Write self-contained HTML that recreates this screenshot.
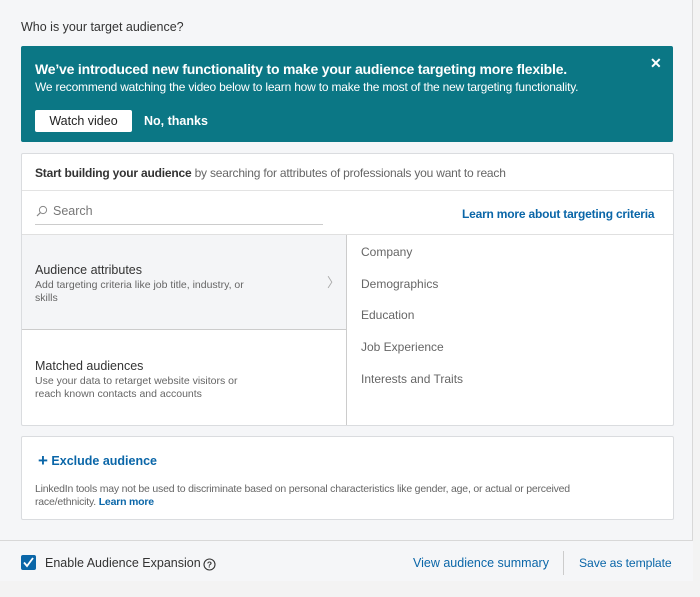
<!DOCTYPE html>
<html><head><style>
*{margin:0;padding:0;box-sizing:border-box}
body{width:700px;height:597px;background:#f3f3f3;font-family:"Liberation Sans",Arial,sans-serif;position:relative;overflow:hidden;color:#333}
.a{position:absolute;white-space:nowrap}
.panel{position:absolute;left:0;top:0;width:693px;height:581px;background:#f5f6f8;border-right:1px solid #d8d8d8;border-bottom:1px solid #d0d0d0}
.box{position:absolute;background:#fff;border:1px solid #dadcdf;border-radius:2px}
.blue{color:#0a66a8;font-weight:bold}
.g{color:#666}
</style></head><body>
<div class="panel"></div>
<div class="a" style="left:21px;top:20px;font-size:12.5px;color:#333">Who is your target audience?</div>

<div class="a" style="left:21px;top:46px;width:652px;height:96px;background:#0b7785;border-radius:2px"></div>
<div class="a" style="left:35px;top:61px;font-size:14px;font-weight:bold;color:#fff;letter-spacing:-0.2px">We’ve introduced new functionality to make your audience targeting more flexible.</div>
<div class="a" style="left:35px;top:80px;font-size:12px;color:#fff;letter-spacing:-0.2px">We recommend watching the video below to learn how to make the most of the new targeting functionality.</div>
<div class="a" style="left:650px;top:55px;font-size:14px;color:#fff;font-weight:bold">✕</div>
<div class="a" style="left:35px;top:110px;width:97px;height:22px;background:#fff;border-radius:2px;font-size:12.5px;color:#222;text-align:center;line-height:22px">Watch video</div>
<div class="a" style="left:144px;top:114px;font-size:12.5px;color:#fff;font-weight:bold">No, thanks</div>

<div class="box" style="left:21px;top:153px;width:653px;height:273px"></div>
<div class="a" style="left:35px;top:166px;font-size:12px;letter-spacing:-0.2px"><b style="color:#333">Start building your audience</b> <span class="g">by searching for attributes of professionals you want to reach</span></div>
<div class="a" style="left:22px;top:190px;width:651px;height:1px;background:#e3e3e3"></div>
<svg class="a" style="left:36px;top:205px" width="12" height="12" viewBox="0 0 12 12"><circle cx="7" cy="5" r="3.6" fill="none" stroke="#888" stroke-width="1"/><path d="M4.3 7.7L1 11" stroke="#888" stroke-width="1.2"/></svg>
<div class="a g" style="left:53px;top:204px;font-size:12.5px;color:#777">Search</div>
<div class="a" style="left:35px;top:224px;width:288px;height:1px;background:#ccc"></div>
<div class="a blue" style="left:462px;top:207px;font-size:12px;letter-spacing:-0.2px">Learn more about targeting criteria</div>
<div class="a" style="left:22px;top:234px;width:651px;height:1px;background:#e0e0e0"></div>
<div class="a" style="left:22px;top:235px;width:324px;height:95px;background:#f4f5f7"></div>
<div class="a" style="left:22px;top:329px;width:324px;height:1px;background:#ccc"></div>
<div class="a" style="left:346px;top:235px;width:1px;height:190px;background:#ccc"></div>
<div class="a" style="left:35px;top:263px;font-size:12.5px;color:#333">Audience attributes</div>
<div class="a g" style="left:35px;top:279px;font-size:10.5px;line-height:13px;white-space:normal;width:230px">Add targeting criteria like job title, industry, or skills</div>
<div class="a" style="left:327px;top:272px;font-size:13px;color:#aaa">〉</div>
<div class="a" style="left:35px;top:359px;font-size:12.5px;color:#333">Matched audiences</div>
<div class="a g" style="left:35px;top:375px;font-size:10.5px;line-height:13px;white-space:normal;width:220px">Use your data to retarget website visitors or reach known contacts and accounts</div>
<div class="a g" style="left:361px;top:245px;font-size:12px">Company</div>
<div class="a g" style="left:361px;top:277px;font-size:12px">Demographics</div>
<div class="a g" style="left:361px;top:308px;font-size:12px">Education</div>
<div class="a g" style="left:361px;top:340px;font-size:12px">Job Experience</div>
<div class="a g" style="left:361px;top:372px;font-size:12px">Interests and Traits</div>

<div class="box" style="left:21px;top:436px;width:653px;height:84px"></div>
<div class="a blue" style="left:38px;top:450px;font-size:12.5px;font-weight:bold"><span style="font-size:17px;position:relative;top:1px">+</span> Exclude audience</div>
<div class="a g" style="left:35px;top:483px;font-size:10.5px;line-height:13px;white-space:normal;width:580px;letter-spacing:-0.2px">LinkedIn tools may not be used to discriminate based on personal characteristics like gender, age, or actual or perceived race/ethnicity. <b style="color:#0a66a8">Learn more</b></div>

<div class="a" style="left:0;top:540px;width:693px;height:41px;background:#f5f6f8;border-top:1px solid #d8d8d8"></div>
<div class="a" style="left:21px;top:555px;width:15px;height:15px;background:#0a66a8;border-radius:2px"></div>
<svg class="a" style="left:21px;top:555px" width="15" height="15" viewBox="0 0 15 15"><path d="M3 7.5L6 11L12 3" fill="none" stroke="#fff" stroke-width="1.8"/></svg>
<div class="a" style="left:45px;top:556px;font-size:12.5px;color:#333">Enable Audience Expansion</div>
<svg class="a" style="left:203px;top:558px" width="13" height="13" viewBox="0 0 13 13"><circle cx="6.5" cy="6.5" r="5.5" fill="none" stroke="#333" stroke-width="1.1"/><text x="6.5" y="9.6" font-size="8.5" font-weight="bold" text-anchor="middle" fill="#333" font-family="Liberation Sans">?</text></svg>
<div class="a" style="left:413px;top:556px;font-size:12.5px;color:#0a66a8">View audience summary</div>
<div class="a" style="left:563px;top:551px;width:1px;height:24px;background:#ccc"></div>
<div class="a" style="left:579px;top:556px;font-size:12.2px;color:#0a66a8;letter-spacing:-0.1px">Save as template</div>
</body></html>
